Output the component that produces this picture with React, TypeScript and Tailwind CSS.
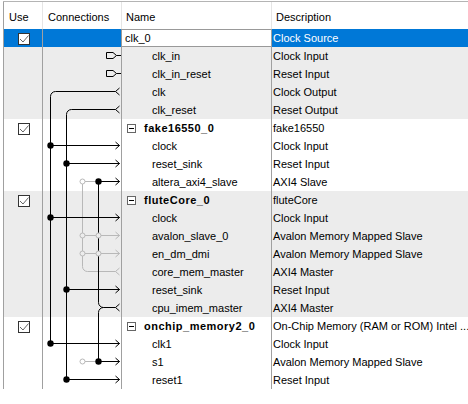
import React from 'react';

type Row = {
  name: string;
  desc: string;
  group?: boolean;
  shaded: boolean;
};

const rows: Row[] = [
  { name: 'clk_0', desc: 'Clock Source', group: true, shaded: true },
  { name: 'clk_in', desc: 'Clock Input', shaded: true },
  { name: 'clk_in_reset', desc: 'Reset Input', shaded: true },
  { name: 'clk', desc: 'Clock Output', shaded: true },
  { name: 'clk_reset', desc: 'Reset Output', shaded: true },
  { name: 'fake16550_0', desc: 'fake16550', group: true, shaded: false },
  { name: 'clock', desc: 'Clock Input', shaded: false },
  { name: 'reset_sink', desc: 'Reset Input', shaded: false },
  { name: 'altera_axi4_slave', desc: 'AXI4 Slave', shaded: false },
  { name: 'fluteCore_0', desc: 'fluteCore', group: true, shaded: true },
  { name: 'clock', desc: 'Clock Input', shaded: true },
  { name: 'avalon_slave_0', desc: 'Avalon Memory Mapped Slave', shaded: true },
  { name: 'en_dm_dmi', desc: 'Avalon Memory Mapped Slave', shaded: true },
  { name: 'core_mem_master', desc: 'AXI4 Master', shaded: true },
  { name: 'reset_sink', desc: 'Reset Input', shaded: true },
  { name: 'cpu_imem_master', desc: 'AXI4 Master', shaded: true },
  { name: 'onchip_memory2_0', desc: 'On-Chip Memory (RAM or ROM) Intel ...', group: true, shaded: false },
  { name: 'clk1', desc: 'Clock Input', shaded: false },
  { name: 's1', desc: 'Avalon Memory Mapped Slave', shaded: false },
  { name: 'reset1', desc: 'Reset Input', shaded: false },
];

const GRAY = '#b8b8b8';
const ry = (i: number) => 37.5 + 18 * i;

// input arrows: [row, x where the wire starts]
const inputs: [number, number][] = [
  [6, 50.5], [7, 66.5], [8, 98.5], [10, 50.5],
  [14, 66.5], [17, 50.5], [18, 98.5], [19, 66.5],
];

const dots: [number, number][] = [
  [50.5, ry(6)], [66.5, ry(7)], [98.5, ry(8)], [50.5, ry(10)],
  [66.5, ry(14)], [50.5, ry(17)], [98.5, ry(18)], [66.5, ry(19)],
];

const hollow: [number, number][] = [
  [82.5, ry(8)], [82.5, ry(11)], [98.5, ry(11)],
  [82.5, ry(12)], [98.5, ry(12)], [82.5, ry(18)],
];

const Wires: React.FC = () => (
  <g fill="none" strokeWidth={1}>
    {/* inactive (gray) connections */}
    <g stroke={GRAY}>
      <path d={`M82.5 ${ry(8)} H98.5`} />
      <path d={`M82.5 ${ry(8)} V${ry(13) - 5} A5 5 0 0 0 87.5 ${ry(13)} H115.5`} />
      <path d={`M119.5 ${ry(13) - 3.5} L115.5 ${ry(13)} L119.5 ${ry(13) + 3.5}`} />
      {[11, 12].map((i) => (
        <g key={i}>
          <path d={`M82.5 ${ry(i)} H119.5`} />
          <path d={`M115.5 ${ry(i) - 3.5} L119.5 ${ry(i)} L115.5 ${ry(i) + 3.5}`} />
        </g>
      ))}
      <path d={`M82.5 ${ry(18)} H98.5`} />
    </g>

    {/* active connections */}
    <g stroke="#000">
      {[1, 2].map((i) => (
        <g key={i}>
          <path d={`M106.5 ${ry(i) - 3} H113 L116.5 ${ry(i)} L113 ${ry(i) + 3} H106.5 Z`} />
          <path d={`M116.5 ${ry(i)} H121`} />
        </g>
      ))}
      <path d={`M115.5 ${ry(3)} H55.5 A5 5 0 0 0 50.5 ${ry(3) + 5} V${ry(17)}`} />
      <path d={`M115.5 ${ry(4)} H71.5 A5 5 0 0 0 66.5 ${ry(4) + 5} V${ry(19)}`} />
      <path d={`M98.5 ${ry(8)} V${ry(15) - 5} A5 5 0 0 0 103.5 ${ry(15)} H115.5`} />
      <path d={`M98.5 ${ry(18)} V${ry(15) + 5} A5 5 0 0 1 103.5 ${ry(15)}`} />
      {[3, 4, 15].map((i) => (
        <path key={i} d={`M119.5 ${ry(i) - 3.5} L115.5 ${ry(i)} L119.5 ${ry(i) + 3.5}`} />
      ))}
      {inputs.map(([i, x]) => (
        <g key={i}>
          <path d={`M${x} ${ry(i)} H119.5`} />
          <path d={`M115.5 ${ry(i) - 3.5} L119.5 ${ry(i)} L115.5 ${ry(i) + 3.5}`} />
        </g>
      ))}
    </g>

    {hollow.map(([x, y], k) => (
      <circle key={k} cx={x} cy={y} r={2.5} stroke={GRAY} fill={y > ry(9) && y < ry(16) ? '#ececec' : '#ffffff'} />
    ))}
    {dots.map(([x, y], k) => (
      <circle key={k} cx={x} cy={y} r={3.2} fill="#000" stroke="none" />
    ))}
  </g>
);

const CheckBox: React.FC = () => (
  <div className="w-[12px] h-[12px] border border-[#333] bg-white">
    <svg width="10" height="10" viewBox="0 0 10 10">
      <polyline points="1,5 4,8 9.5,1.5" fill="none" stroke="#666" strokeWidth={1} />
    </svg>
  </div>
);

const MinusBox: React.FC = () => (
  <div className="w-[9px] h-[9px] border border-[#666] bg-white flex items-center justify-center">
    <div className="w-[5px] h-px bg-black" />
  </div>
);

const cols = 'grid grid-cols-[39px_79px_150px_197px]';

export default function App() {
  return (
    <div className="w-[468px] h-[404px] bg-white overflow-hidden font-['Liberation_Sans',Arial,sans-serif] text-[11px] text-black">
      <div className="mt-px ml-[3px] border-t border-[#b4b4b4]">
        {/* Header */}
        <div className={`${cols} h-[27px] bg-white`}>
          <div className="border-l border-[#a0a0a0] pl-[5px] pt-[9px] leading-[12px]">Use</div>
          <div className="border-l border-[#e5e5e5] pl-[5px] pt-[9px] leading-[12px]">Connections</div>
          <div className="border-l border-[#e5e5e5] pl-[4px] pt-[9px] leading-[12px]">Name</div>
          <div className="border-l border-[#e5e5e5] pl-[4px] pt-[9px] leading-[12px]">Description</div>
        </div>

        {/* Body */}
        {rows.map((row, i) => {
          const selected = i === 0;
          const bg = row.shaded ? 'bg-[#ececec]' : 'bg-white';
          return (
            <div key={i} className={`${cols} h-[18px] leading-[18px] ${bg}`}>
              <div className={`border-l border-[#a0a0a0] flex justify-center pt-[4px] pl-px ${selected ? 'bg-[#0078d7]' : ''}`}>
                {row.group && <CheckBox />}
              </div>
              <div className={`border-l border-[#a0a0a0] ${selected ? 'bg-[#0078d7]' : ''}`}>
                {!selected && (
                  <svg width="78" height="18" viewBox={`43 ${29 + 18 * i} 78 18`} className="block">
                    <Wires />
                  </svg>
                )}
              </div>
              {selected ? (
                <div className="border-l border-y border-[#999] bg-white pl-[3px] leading-[16px]">{row.name}</div>
              ) : row.group ? (
                <div className="border-l border-[#a0a0a0] flex items-center pl-[5px] gap-[8px]">
                  <MinusBox />
                  <span className="font-bold tracking-[0.5px]">{row.name}</span>
                </div>
              ) : (
                <div className="border-l border-[#a0a0a0] pl-[30px] whitespace-nowrap">{row.name}</div>
              )}
              <div className={`border-l border-[#a0a0a0] pl-px whitespace-nowrap overflow-hidden ${selected ? 'bg-[#0078d7] text-white' : ''}`}>
                {row.desc}
              </div>
            </div>
          );
        })}
      </div>
    </div>
  );
}
